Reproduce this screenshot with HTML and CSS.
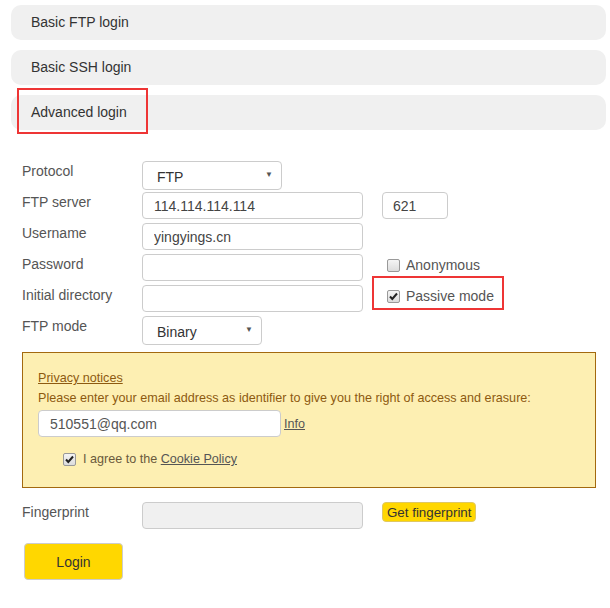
FILE: index.html
```html
<!DOCTYPE html>
<html lang="en">

<head>
    <meta charset="UTF-8">
    <meta name="viewport" content="width=device-width, initial-scale=1.0">
    <title>Login</title>
    <link rel="stylesheet" href="styles.css">
</head>

<body>
    <div class="tabs">
        <div class="tab">Basic FTP login</div>
        <div class="tab">Basic SSH login</div>
        <div class="tab active">Advanced login<span class="mark mark-tab"></span></div>
    </div>

    <form class="form">
        <div class="row">
            <label class="lbl">Protocol</label>
            <div class="select sel-proto">
                <select>
                    <option>FTP</option>
                </select>
            </div>
        </div>
        <div class="row">
            <label class="lbl">FTP server</label>
            <input class="txt" type="text" value="114.114.114.114">
            <input class="txt port" type="text" value="621">
        </div>
        <div class="row">
            <label class="lbl">Username</label>
            <input class="txt" type="text" value="yingyings.cn">
        </div>
        <div class="row">
            <label class="lbl">Password</label>
            <input class="txt" type="password" value="">
            <span class="chk-item"><span class="cb"></span>Anonymous</span>
        </div>
        <div class="row">
            <label class="lbl">Initial directory</label>
            <input class="txt" type="text" value="">
            <span class="chk-item"><span class="cb checked"><svg viewBox="0 0 11 11" width="11" height="11"><path d="M2 5.5 L4.3 8 L9 2.5" fill="none" stroke="#222" stroke-width="2"/></svg></span>Passive mode<span class="mark mark-passive"></span></span>
        </div>
        <div class="row">
            <label class="lbl">FTP mode</label>
            <div class="select sel-mode">
                <select>
                    <option>Binary</option>
                </select>
            </div>
        </div>

        <div class="notice">
            <div class="line"><a href="javascript:;" class="link">Privacy notices</a></div>
            <div class="line">Please enter your email address as identifier to give you the right of access and erasure:</div>
            <div class="email-row">
                <input class="txt email" type="text" value="510551@qq.com">
                <a href="javascript:;" class="info">Info</a>
            </div>
            <div class="agree">
                <span class="cb checked"><svg viewBox="0 0 11 11" width="11" height="11"><path d="M2 5.5 L4.3 8 L9 2.5" fill="none" stroke="#222" stroke-width="2"/></svg></span>
                I agree to the&nbsp;<a href="javascript:;" class="info">Cookie Policy</a>
            </div>
        </div>

        <div class="row finger">
            <label class="lbl">Fingerprint</label>
            <input class="txt disabled" type="text" value="" disabled>
            <button type="button" class="getfp">Get fingerprint</button>
        </div>

        <button type="button" class="login">Login</button>
    </form>
</body>

</html>
```

FILE: styles.css
```css
* {
    margin: 0;
    padding: 0;
    box-sizing: border-box;
}

body {
    font-family: "Liberation Sans", Arial, sans-serif;
    font-size: 14px;
    color: #333;
    background: #fff;
}

.tabs {
    padding: 5px 4px 0 11px;
}

.tab {
    position: relative;
    height: 35px;
    line-height: 34px;
    padding-left: 20px;
    margin-bottom: 10px;
    background-color: #f0f0f0;
    border-radius: 10px;
    color: #333;
}

.tab.active {
    margin-bottom: 0;
}

.mark {
    position: absolute;
    border: 2px solid #ee3535;
}

.mark-tab {
    left: 6px;
    top: -7px;
    width: 131px;
    height: 46px;
}

.form {
    padding: 31px 14px 20px 22px;
}

.row {
    display: flex;
    align-items: flex-start;
    height: 31px;
}

.lbl {
    width: 120px;
    line-height: 20px;
    color: #555;
    flex-shrink: 0;
}

.txt {
    width: 221px;
    height: 27px;
    padding: 0 11px;
    border: 1px solid #ccc;
    border-radius: 4px;
    font-family: "Liberation Sans", Arial, sans-serif;
    font-size: 14px;
    color: #444;
    background: #fff;
    outline: none;
}

.txt.port {
    width: 66px;
    margin-left: 19px;
    padding: 0 10px;
}

.txt.disabled {
    background: #f0f0f0;
}

.select {
    position: relative;
    height: 29px;
}

.select select {
    appearance: none;
    -webkit-appearance: none;
    width: 100%;
    height: 29px;
    padding-left: 14px;
    border: 1px solid #ccc;
    border-radius: 4px;
    background: #fff;
    font-family: "Liberation Sans", Arial, sans-serif;
    font-size: 14px;
    color: #333;
    padding-top: 2px;
}

.select::after {
    content: "\25BC";
    position: absolute;
    right: 9px;
    top: 9px;
    font-size: 8px;
    color: #555;
    pointer-events: none;
}

.sel-proto {
    width: 140px;
}

.sel-mode {
    width: 120px;
}

.chk-item {
    position: relative;
    display: flex;
    align-items: center;
    height: 24px;
    margin-left: 19px;
    margin-top: -1px;
    padding-left: 5px;
    color: #555;
}

.cb {
    display: inline-flex;
    align-items: center;
    justify-content: center;
    width: 13px;
    height: 13px;
    margin-right: 6px;
    border: 1px solid #999;
    border-radius: 2px;
    background: linear-gradient(#f4f4f4, #dcdcdc);
}

.mark-passive {
    left: -10px;
    top: -8px;
    width: 132px;
    height: 34px;
}

.notice {
    margin-top: 5px;
    padding: 15px 15px 18px 15px;
    border: 1px solid #a3690f;
    background-color: #fdefb2;
    color: #8d5a10;
    font-size: 12.6px;
}

.line {
    line-height: 20px;
}

.link {
    color: #8d5a10;
    text-decoration: underline;
}

.email-row {
    display: flex;
    align-items: center;
    margin-top: 2px;
}

.txt.email {
    width: 243px;
    color: #555;
}

.info {
    margin-left: 3px;
    color: #555;
    text-decoration: underline;
}

.agree {
    display: flex;
    align-items: center;
    height: 20px;
    margin-top: 12px;
    padding-left: 25px;
    color: #6a5a3c;
}

.agree .info {
    margin-left: 0;
}

.agree .cb {
    margin-right: 7px;
}

.finger {
    margin-top: 14px;
}

.getfp {
    height: 20px;
    margin-left: 19px;
    padding: 0 4px;
    border: 1px solid #e0c860;
    border-radius: 4px;
    background: #ffd700;
    font-family: "Liberation Sans", Arial, sans-serif;
    font-size: 13.33px;
    color: #333;
}

.login {
    display: block;
    width: 99px;
    height: 37px;
    margin-left: 2px;
    margin-top: 10px;
    border: 1px solid #ccc;
    border-radius: 4px;
    background: #ffd700;
    font-family: "Liberation Sans", Arial, sans-serif;
    font-size: 14px;
    color: #333;
}
```
